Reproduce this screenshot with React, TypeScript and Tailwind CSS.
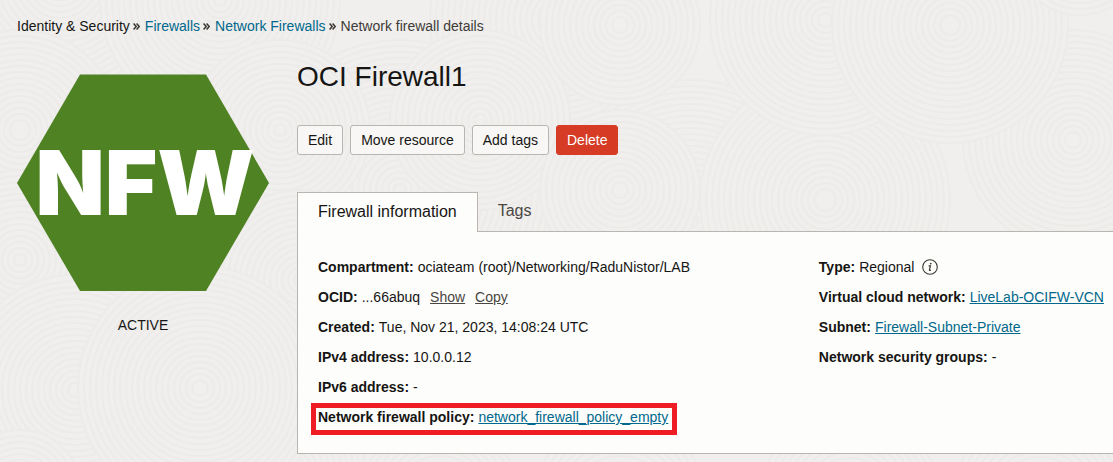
import type { ReactNode } from "react";

type Swirl = { x: number; y: number; r: number };

const SWIRLS: Swirl[] = [
  { x: 60, y: -20, r: 110 },
  { x: 220, y: 0, r: 120 },
  { x: 400, y: 190, r: 150 },
  { x: 560, y: 20, r: 130 },
  { x: 480, y: 120, r: 90 },
  { x: 20, y: 130, r: 100 },
  { x: 280, y: 130, r: 90 },
  { x: 20, y: 260, r: 90 },
  { x: 300, y: 280, r: 90 },
  { x: 690, y: 220, r: 140 },
  { x: 825, y: 200, r: 125 },
  { x: 620, y: 190, r: 80 },
  { x: 1073, y: 140, r: 110 },
  { x: 825, y: 20, r: 115 },
  { x: 620, y: 25, r: 80 },
  { x: 950, y: 25, r: 118 },
  { x: 1080, y: -50, r: 65 },
  { x: 75, y: 390, r: 115 },
  { x: 290, y: 470, r: 75 },
  { x: 200, y: 388, r: 122 },
  { x: 20, y: 490, r: 60 },
  { x: 440, y: 500, r: 80 },
  { x: 620, y: 510, r: 90 },
  { x: 850, y: 500, r: 90 },
  { x: 1040, y: 505, r: 90 },
];

function Backdrop() {
  return (
    <svg
      aria-hidden="true"
      className="pointer-events-none absolute inset-0 -z-10 h-full w-full"
      viewBox="0 0 1113 462"
      preserveAspectRatio="xMidYMid slice"
      fill="none"
    >
      {SWIRLS.map((s) => (
        <g key={`${s.x}-${s.y}`}>
          <circle cx={s.x} cy={s.y} r={s.r} fill="#f0efed" />
          {Array.from({ length: Math.floor(s.r / 6) }, (_, i) => (
            <circle key={i} cx={s.x} cy={s.y} r={s.r - i * 6} stroke="#ecebe9" strokeWidth="2" />
          ))}
        </g>
      ))}
    </svg>
  );
}

function Separator() {
  return (
    <svg aria-hidden="true" className="mt-px mr-[5px] ml-[3px] h-[7px] w-[7px]" viewBox="0 0 7 7" fill="none" stroke="#3a3632" strokeWidth="1.5">
      <path d="M0.6 0.6 L3.2 3.5 L0.6 6.4 M3.6 0.6 L6.2 3.5 L3.6 6.4" />
    </svg>
  );
}

function Link({ children }: { children: ReactNode }) {
  return (
    <a href="#" className="text-[#00688c] underline underline-offset-1">
      {children}
    </a>
  );
}

function Field({ label, children }: { label: string; children: ReactNode }) {
  return (
    <div className="flex h-[30px] items-center gap-1">
      <dt className="font-bold">{label}:</dt>
      <dd className="flex items-center">{children}</dd>
    </div>
  );
}

const plainButton = "h-[30px] rounded-[3px] border border-[#b9b5b0] bg-[#f8f7f5] px-2.5";

export default function App() {
  return (
    <div className="relative isolate min-h-screen overflow-hidden bg-[#f0efed] font-['Liberation_Sans',Arial,sans-serif] text-sm leading-5 whitespace-nowrap text-[#161513]">
      <Backdrop />
      <nav aria-label="Breadcrumb" className="flex items-center pt-4 pl-[17px]">
        <span>Identity &amp; Security</span>
        <Separator />
        <a href="#" className="text-[#00688c]">Firewalls</a>
        <Separator />
        <a href="#" className="text-[#00688c]">Network Firewalls</a>
        <Separator />
        <span className="text-[#3f3b38]">Network firewall details</span>
      </nav>

      <div className="flex gap-7 pl-[17px]">
        <aside className="flex w-[252px] shrink-0 flex-col items-center gap-6 pt-[38px]">
          <svg className="h-[217px] w-[252px]" viewBox="0 0 252 217" role="img" aria-label="NFW">
            <polygon points="63,0.5 189,0.5 252,109 189,217 63,217 0,109" fill="#4f8223" />
            <text x="128" y="141" textAnchor="middle" fill="#ffffff" className="font-['Inter',sans-serif] text-[90px] font-black">
              NFW
            </text>
          </svg>
          <span>ACTIVE</span>
        </aside>

        <main className="min-w-0 flex-1">
          <h1 className="pt-[23px] text-[28px] leading-9">OCI Firewall1</h1>
          <div className="mt-[30px] flex gap-[7px]">
            <button type="button" className={plainButton}>Edit</button>
            <button type="button" className={plainButton}>Move resource</button>
            <button type="button" className={plainButton}>Add tags</button>
            <button type="button" className="h-[30px] rounded-[3px] border border-[#d63b25] bg-[#d63b25] px-2.5 text-white">Delete</button>
          </div>

          <div role="tablist" className="mt-[37px] flex text-base">
            <button type="button" role="tab" aria-selected="true" className="z-10 -mb-px h-10 border border-b-0 border-[#b9b5b0] bg-[#fdfdfb] px-5 pb-0.5">
              Firewall information
            </button>
            <button type="button" role="tab" aria-selected="false" className="h-[38px] px-5 text-[#4a4642]">
              Tags
            </button>
          </div>

          <section role="tabpanel" className="grid grid-cols-[63fr_37fr] border border-r-0 border-[#b9b5b0] bg-[#fdfdfb] pt-5 pb-[21px] pl-5">
            <dl className="min-w-0">
              <Field label="Compartment">ociateam (root)/Networking/RaduNistor/LAB</Field>
              <Field label="OCID">
                <span>...66abuq</span>
                <button type="button" className="ml-2.5 text-[#4a4642] underline underline-offset-1">Show</button>
                <button type="button" className="ml-2.5 text-[#4a4642] underline underline-offset-1">Copy</button>
              </Field>
              <Field label="Created">Tue, Nov 21, 2023, 14:08:24 UTC</Field>
              <Field label="IPv4 address">10.0.0.12</Field>
              <Field label="IPv6 address">-</Field>
              <div className="mt-px -mb-[3px] -ml-[7px] flex h-8 w-fit items-center gap-1 border-[5px] border-[#ee1c25] pr-1 pb-1 pl-0.5">
                <dt className="font-bold">Network firewall policy:</dt>
                <dd><Link>network_firewall_policy_empty</Link></dd>
              </div>
            </dl>
            <dl className="min-w-0">
              <Field label="Type">
                Regional
                <svg className="ml-2 h-4 w-4" viewBox="0 0 16 16" role="img" aria-label="Information" fill="none" stroke="#3a3632">
                  <circle cx="8" cy="8" r="7.3" strokeWidth="1.1" />
                  <path d="M6.6 6.8 H8.4 L7.4 11 Q7.3 11.8 8.9 11.2" strokeWidth="1.2" />
                  <circle cx="8.7" cy="4.6" r="0.9" fill="#3a3632" stroke="none" />
                </svg>
              </Field>
              <Field label="Virtual cloud network"><Link>LiveLab-OCIFW-VCN</Link></Field>
              <Field label="Subnet"><Link>Firewall-Subnet-Private</Link></Field>
              <Field label="Network security groups">-</Field>
            </dl>
          </section>
        </main>
      </div>
    </div>
  );
}
